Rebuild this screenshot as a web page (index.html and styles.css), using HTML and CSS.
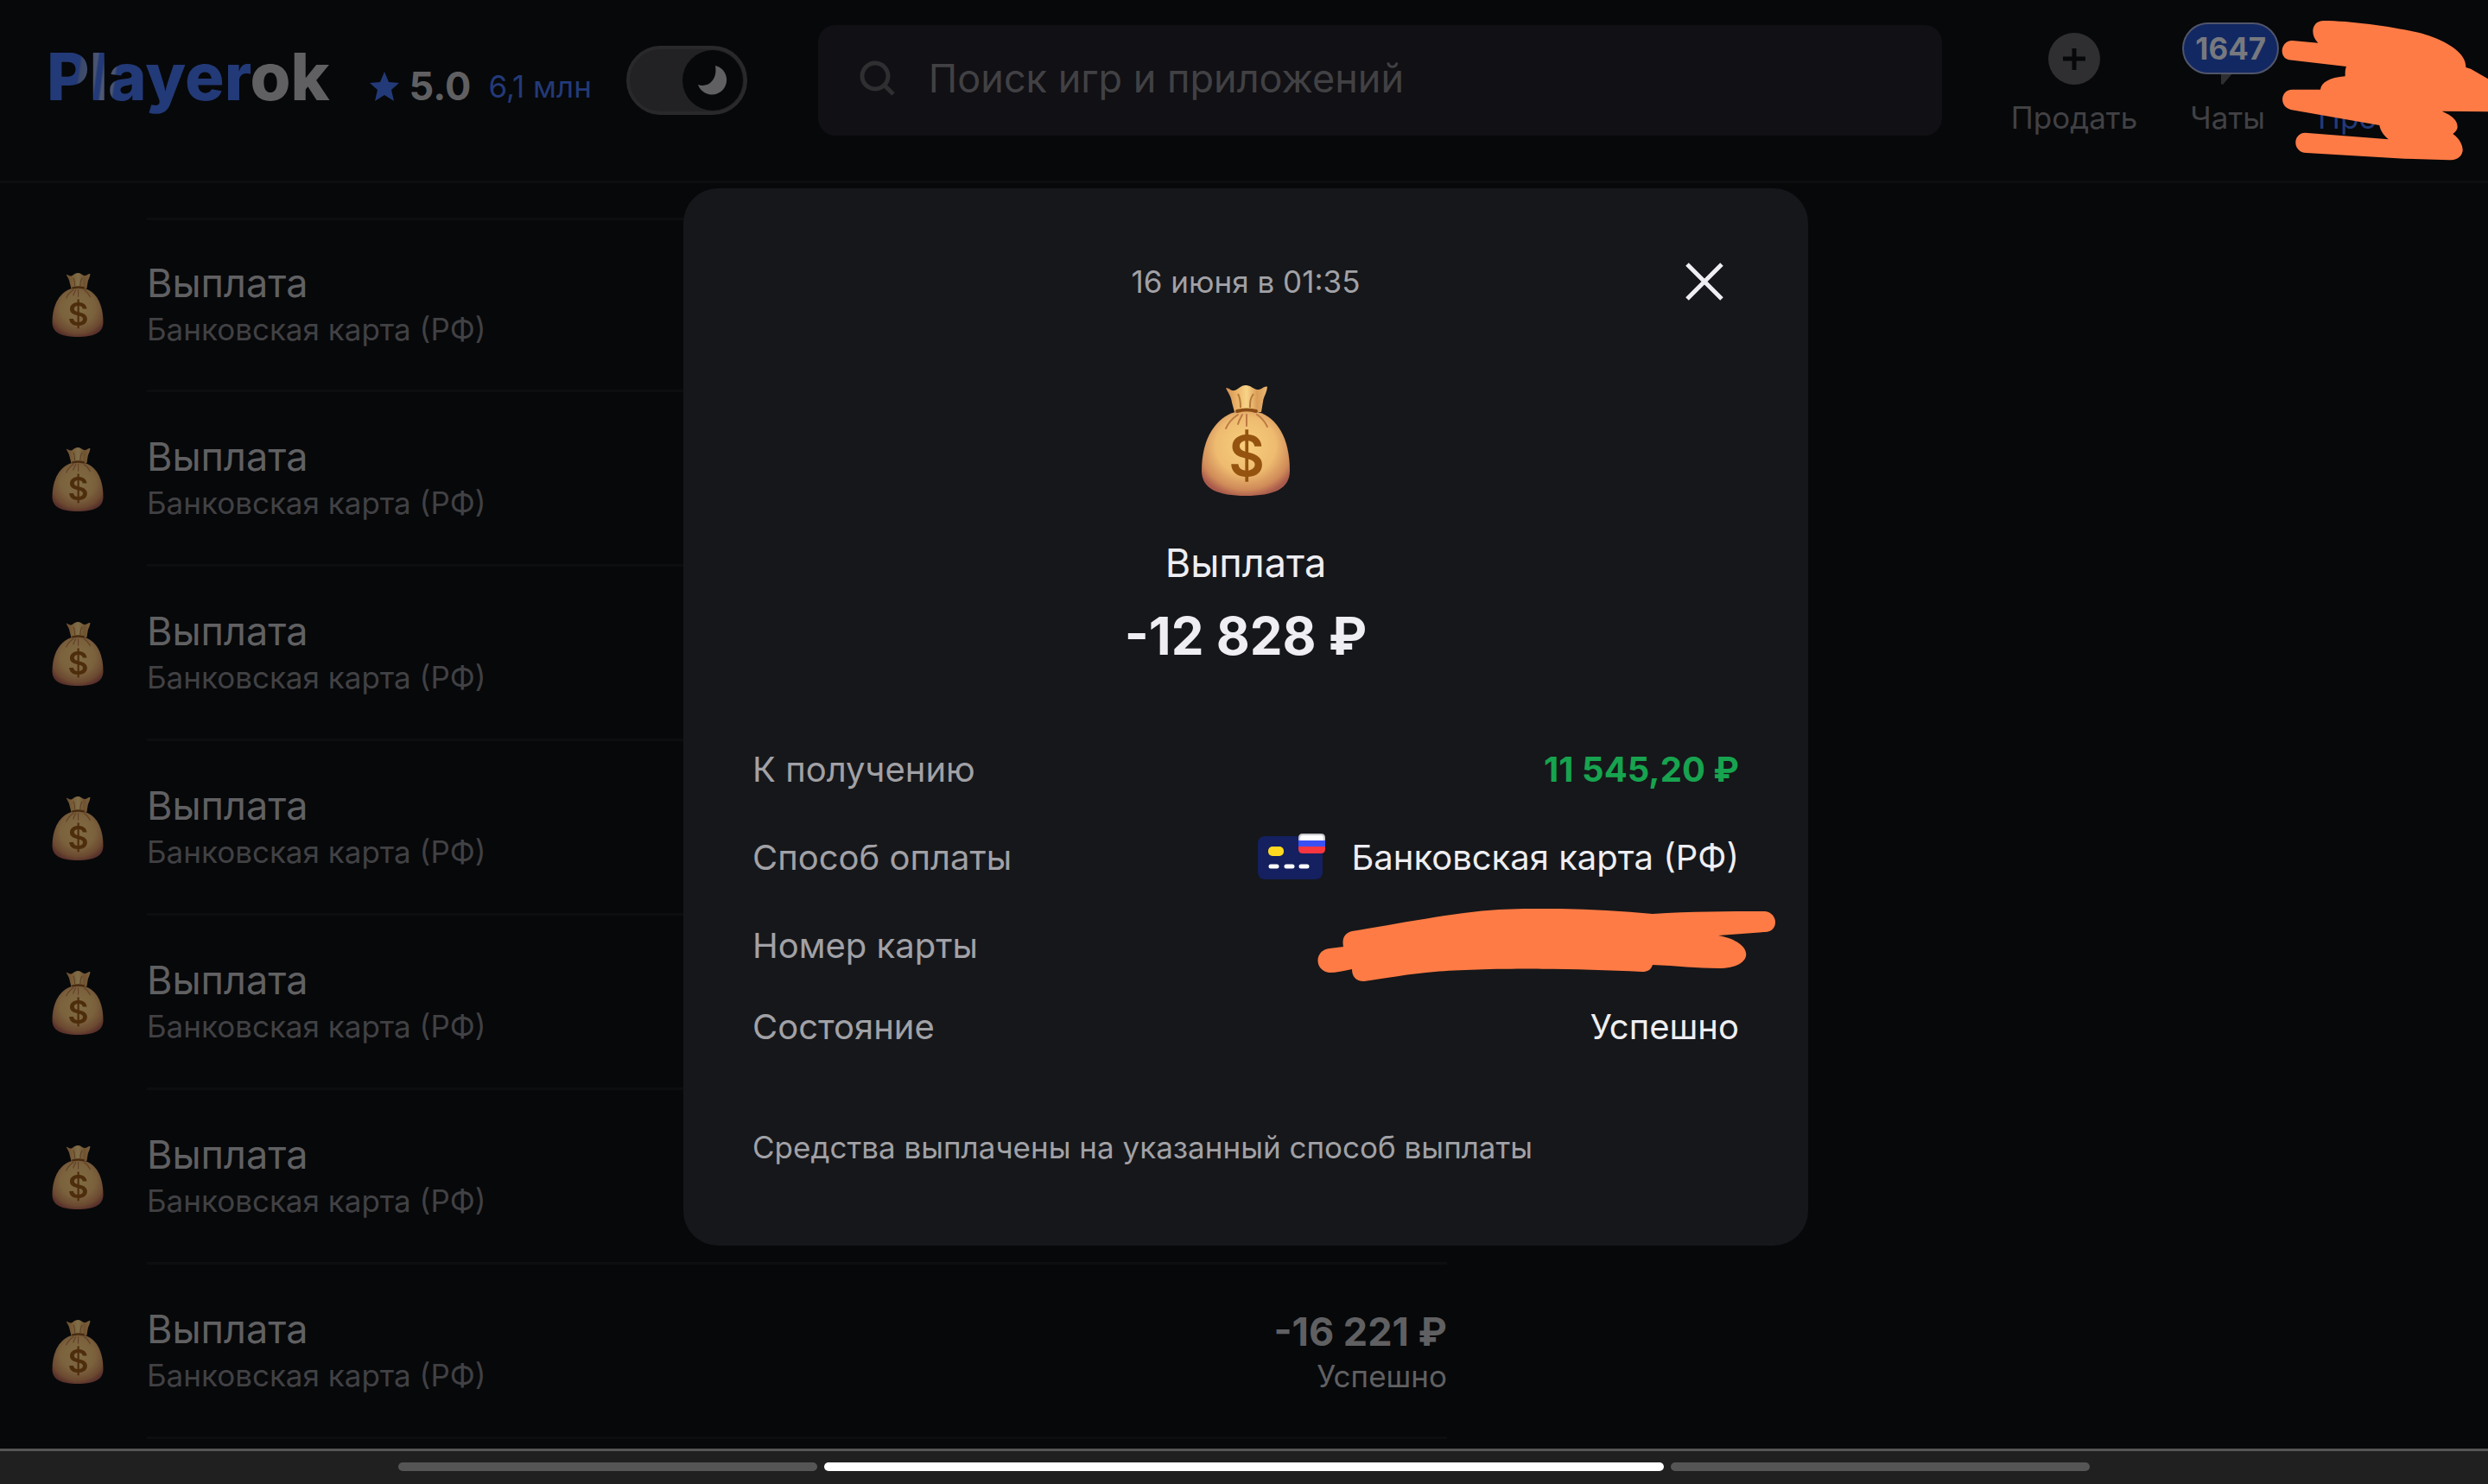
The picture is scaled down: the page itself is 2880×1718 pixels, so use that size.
FILE: index.html
```html
<!DOCTYPE html>
<html lang="ru">
<head>
    <meta charset="UTF-8">
    <meta name="viewport" content="width=device-width, initial-scale=1.0">
    <title>Playerok</title>
    <link rel="stylesheet" href="styles.css">
</head>
<body>

<!-- Мешок с деньгами, используется в списке и в окне -->
<svg class="gradients" aria-hidden="true">
    <defs>
        <radialGradient id="bag-body" cx="50%" cy="40%" r="62%">
            <stop offset="0" stop-color="#f8cf7c"/>
            <stop offset="0.55" stop-color="#eebb70"/>
            <stop offset="0.85" stop-color="#cf8a58"/>
            <stop offset="1" stop-color="#a95a4c"/>
        </radialGradient>
        <linearGradient id="bag-neck" x1="0" y1="0" x2="1" y2="0">
            <stop offset="0" stop-color="#d18f55"/>
            <stop offset="0.25" stop-color="#e9b266"/>
            <stop offset="0.5" stop-color="#f8d488"/>
            <stop offset="0.75" stop-color="#d99d58"/>
            <stop offset="1" stop-color="#e9b673"/>
        </linearGradient>
    </defs>
</svg>
<svg class="sprite" aria-hidden="true">
    <symbol id="bag" viewBox="0 0 102 128">
        <path fill="url(#bag-neck)" d="M28 3c4 0 6 4 10 3s7-6 13-6 8 4 13 5 9-5 12-3c-1 8-4 10-5 17l-2 12H38l-3-11C34 12 31 10 28 3z"/>
        <path fill="none" stroke="#b5783c" stroke-width="2" d="M42 10c3 5 3 10 3 16M60 10c-4 5-4 10-4 16"/>
        <path fill="url(#bag-body)" d="M39 31h26c22 6 37 30 37 68 0 21-19 29-51 29S0 120 0 99c0-38 17-62 39-68z"/>
        <path fill="none" stroke="#bd7a45" stroke-width="2" stroke-linecap="round" d="M42 34c-6 4-11 9-14 16M52 34v13M64 34c5 3 9 8 12 14M47 34c-2 4-4 7-5 11"/>
        <path fill="none" stroke="#8a4c14" stroke-width="4" stroke-linecap="round" d="M41 30q11-3 22 0"/>
        <text x="52" y="105" text-anchor="middle" class="bag-sign">$</text>
    </symbol>
</svg>

<!-- Шапка -->
<header class="header">
    <a class="logo" href="#"><span class="logo-player">Player</span>ok</a>
    <div class="rating">
        <svg class="rating-star" viewBox="0 0 34 34"><path d="M17 0l5 12 12 1-9 8 3 13-11-7-11 7 3-13-9-8 12-1z"/></svg>
        <span class="rating-value">5.0</span>
        <a class="rating-count" href="#">6,1 млн</a>
    </div>
    <label class="theme">
        <input type="checkbox" class="theme-input" aria-label="Тёмная тема" checked>
        <span class="theme-knob">
            <svg class="theme-moon" viewBox="0 0 34 34"><path d="M20 0a17 17 0 1 1-20 22C12 26 23 16 20 0z"/></svg>
        </span>
    </label>
    <label class="search">
        <svg class="search-icon" viewBox="0 0 42 42"><circle cx="18" cy="18" r="15"/><path d="M29 29l10 10"/></svg>
        <input type="text" class="search-input" placeholder="Поиск игр и приложений" aria-label="Поиск">
    </label>
    <nav class="menu">
        <a class="menu-item" href="#">
            <svg class="menu-icon" viewBox="0 0 60 60"><circle cx="30" cy="30" r="30"/><path d="M30 18v25M17 30h26"/></svg>
            Продать
        </a>
        <a class="menu-item" href="#">
            <svg class="menu-icon" viewBox="0 0 60 60"><path class="bubble" d="M14 8h32v38H36L24 60l-2-1V46h-8z"/></svg>
            Чаты
            <span class="badge">1647</span>
        </a>
        <a class="menu-item active" href="#">
            <span class="menu-icon"></span>
            Профиль
            <svg class="scribble" viewBox="0 0 720 492">
                <path d="M150 3C250 3 420 28 500 50c80 25 145 65 143 115l17 5 60 35v114l-160-2c40 18 54 33 54 55q0 12-16 24c27 19 35 44 34 59-4 25-27 32-47 32l-155-5-340-20c-50-2-50-68-5-70l290 23c-20-15-30-35-32-49L35 312c-43-12-35-70 5-70h98c2-24 32-42 86-46 0-16 0-26 4-34L28 139C-8 130 0 72 40 72l90 8C100 50 108 3 150 3z"/>
            </svg>
        </a>
    </nav>
</header>

<!-- Список операций -->
<main class="list">
    <div class="row"><svg class="row-bag"><use href="#bag"/></svg><div class="row-body"><div><div class="row-title">Выплата</div><div class="row-sub">Банковская карта (РФ)</div></div></div></div>
    <div class="row"><svg class="row-bag"><use href="#bag"/></svg><div class="row-body"><div><div class="row-title">Выплата</div><div class="row-sub">Банковская карта (РФ)</div></div></div></div>
    <div class="row"><svg class="row-bag"><use href="#bag"/></svg><div class="row-body"><div><div class="row-title">Выплата</div><div class="row-sub">Банковская карта (РФ)</div></div></div></div>
    <div class="row"><svg class="row-bag"><use href="#bag"/></svg><div class="row-body"><div><div class="row-title">Выплата</div><div class="row-sub">Банковская карта (РФ)</div></div></div></div>
    <div class="row"><svg class="row-bag"><use href="#bag"/></svg><div class="row-body"><div><div class="row-title">Выплата</div><div class="row-sub">Банковская карта (РФ)</div></div></div></div>
    <div class="row"><svg class="row-bag"><use href="#bag"/></svg><div class="row-body"><div><div class="row-title">Выплата</div><div class="row-sub">Банковская карта (РФ)</div></div></div></div>
    <div class="row">
        <svg class="row-bag"><use href="#bag"/></svg>
        <div class="row-body">
            <div><div class="row-title">Выплата</div><div class="row-sub">Банковская карта (РФ)</div></div>
            <div class="row-right"><div class="row-sum">-16 221 ₽</div><div class="row-status">Успешно</div></div>
        </div>
    </div>
</main>

<!-- Окно операции -->
<div class="overlay">
    <section class="modal" role="dialog" aria-label="Выплата">
        <div class="modal-head">
            <span class="modal-date">16 июня в 01:35</span>
            <button class="modal-close" aria-label="Закрыть"><svg viewBox="0 0 44 44"><path d="M2 2l40 40M42 2L2 42"/></svg></button>
        </div>
        <svg class="modal-bag"><use href="#bag"/></svg>
        <h2 class="modal-title">Выплата</h2>
        <div class="modal-sum">-12 828 ₽</div>
        <dl class="details">
            <div class="detail"><dt>К получению</dt><dd class="green">11 545,20 ₽</dd></div>
            <div class="detail detail-method">
                <dt>Способ оплаты</dt>
                <dd>
                    <svg class="card-icon" viewBox="0 0 78 54">
                        <rect x="0" y="3" width="75" height="50" rx="8" fill="#14205f"/>
                        <rect x="12" y="15" width="18" height="11" rx="5" fill="#ffd91f"/>
                        <path d="M15 38h7M33 38h7M50 38h7" stroke="#fff" stroke-width="5" stroke-linecap="round"/>
                        <path d="M47 8V5q0-5 5-5h21q5 0 5 5v3z" fill="#c9c9cf"/>
                        <path d="M49 8V5q0-3 3-3h21q3 0 3 3v3z" fill="#fff"/>
                        <path d="M47 8h31v7H47z" fill="#3a50f5"/>
                        <path d="M47 15h31v3q0 5-5 5H52q-5 0-5-5z" fill="#f73640"/>
                    </svg>
                    Банковская карта (РФ)
                </dd>
            </div>
            <div class="detail">
                <dt>Номер карты</dt>
                <dd>
                    <svg class="marker" viewBox="0 0 530 84"><path d="M40 26C90 18 160 4 210 1c60-3 120 0 178 5 45-3 90-3 130-3 16 2 16 24 0 24l-54 4c44 8 42 38 0 38-24 0-48-3-76-4-2 6-6 8-12 8-90-5-190-4-240 0-28 2-60 8-82 11-10 0-14-6-14-14-10 2-18 4-26 4-18-2-18-26 0-28l16-2c-2-10 2-16 10-18z"/></svg>
                </dd>
            </div>
            <div class="detail"><dt>Состояние</dt><dd>Успешно</dd></div>
        </dl>
        <p class="modal-note">Средства выплачены на указанный способ выплаты</p>
    </section>
</div>

<!-- Нижняя панель -->
<footer class="tabs">
    <span class="tab"></span>
    <span class="tab active"></span>
    <span class="tab"></span>
</footer>

</body>
</html>
```
FILE: styles.css
```css
* {
    box-sizing: border-box;
}

body {
    font-family: Inter, "Liberation Sans", sans-serif;
    font-size: 35px;
    background-color: #07080a;
    margin: 0;
    padding: 0;
    color: #606062;
    height: 100vh;
    overflow: hidden;
}

a {
    color: inherit;
    text-decoration: none;
}

.gradients {
    position: absolute;
    width: 0;
    height: 0;
}

.sprite {
    display: none;
}

.bag-sign {
    font-size: 64px;
    font-weight: 600;
    fill: #955310;
}

/* Шапка */
.header {
    display: flex;
    align-items: center;
    height: 212px;
    padding: 0 44px 24px 54px;
    border-bottom: 3px solid #0d0e10;
}

.logo {
    padding-bottom: 10px;
    font-size: 76px;
    font-weight: 800;
    line-height: 92px;
}

.logo-player {
    color: transparent;
    background: linear-gradient(98deg, #233a78 17%, #3b4868 18%, #4a5572 25%, #233a78 26%, #233a78 28%, #4f5972 29%, #4a5572 34%, #233a78 35%);
    background-clip: text;
    -webkit-background-clip: text;
}

.rating {
    display: flex;
    align-items: center;
    margin-left: 46px;
    padding-top: 14px;
}

.rating-star {
    width: 34px;
    height: 34px;
    fill: #233a78;
}

.rating-value {
    margin-left: 12px;
    font-size: 45px;
    font-weight: 700;
}

.rating-count {
    margin-left: 20px;
    color: #233a78;
}

.theme {
    position: relative;
    flex-shrink: 0;
    width: 140px;
    height: 80px;
    margin-left: 40px;
    border: 4px solid #29292b;
    border-radius: 40px;
    background-color: #222224;
}

.theme-input {
    position: absolute;
    opacity: 0;
}

.theme-knob {
    position: absolute;
    top: 1px;
    right: 1px;
    display: flex;
    align-items: center;
    justify-content: center;
    width: 70px;
    height: 70px;
    border-radius: 50%;
    background-color: #07080a;
}

.theme-moon {
    width: 34px;
    height: 34px;
    fill: #606062;
}

.search {
    display: flex;
    align-items: center;
    flex: 1;
    height: 128px;
    margin-left: 82px;
    padding: 0 48px 4px;
    border-radius: 20px;
    background-color: #111014;
}

.search-icon {
    width: 42px;
    height: 42px;
    fill: none;
    stroke: #2f2f32;
    stroke-width: 5;
}

.search-input {
    flex: 1;
    margin-left: 38px;
    padding: 0;
    border: none;
    background: none;
    font-family: inherit;
    font-size: 45px;
    color: #606062;
}

.search-input::placeholder {
    color: #414144;
    opacity: 1;
}

.menu {
    display: flex;
    gap: 61px;
    margin-left: 80px;
    padding-top: 10px;
    color: #414144;
}

.menu-item {
    position: relative;
    display: flex;
    flex-direction: column;
    align-items: center;
    line-height: 44px;
}

.menu-item.active {
    color: #233a78;
}

.menu-icon {
    width: 60px;
    height: 60px;
    margin-bottom: 16px;
    fill: #2f2f32;
    stroke: #07080a;
    stroke-width: 5;
}

.menu-icon circle,
.bubble {
    stroke: none;
}

.badge {
    position: absolute;
    top: -12px;
    left: -9px;
    width: 112px;
    border: 2px solid #50556a;
    border-radius: 30px;
    background-color: #122863;
    color: #77797f;
    font-weight: 700;
    line-height: 56px;
    text-align: center;
}

.scribble {
    position: absolute;
    top: -15px;
    left: -43px;
    width: 240px;
    height: 164px;
    fill: #ff7b45;
}

/* Список */
.list {
    width: 1675px;
    padding-top: 40px;
}

.row {
    display: flex;
    align-items: center;
    height: 202px;
    padding-left: 60px;
}

.row-bag {
    width: 60px;
    height: 74px;
    opacity: 0.5;
}

.row-body {
    display: flex;
    align-items: center;
    justify-content: space-between;
    flex: 1;
    height: 100%;
    margin-left: 50px;
    border-bottom: 3px solid #0d0e10;
}

.row:first-child .row-body {
    border-top: 3px solid #0d0e10;
}

.row-title {
    font-size: 45px;
    line-height: 56px;
}

.row-sub,
.row-status {
    line-height: 50px;
}

.row-sub {
    color: #414144;
}

.row-right {
    padding-top: 6px;
    text-align: right;
}

.row-sum {
    font-size: 45px;
    font-weight: 700;
    line-height: 52px;
}

/* Окно */
.overlay {
    position: fixed;
    inset: 0;
    padding: 218px 0 0 4px;
}

.modal {
    width: 1302px;
    margin: 0 auto;
    padding: 80px 80px 92px;
    border-radius: 40px;
    background-color: #16171a;
    color: #eeeef3;
    font-size: 40px;
}

.modal-head {
    display: flex;
    align-items: center;
    justify-content: center;
    position: relative;
    height: 56px;
}

.modal-date,
.modal-note {
    font-size: 35px;
    color: #a1a1a6;
}

.modal-close {
    position: absolute;
    right: 18px;
    width: 44px;
    height: 44px;
    padding: 0;
    border: none;
    background: none;
    cursor: pointer;
}

.modal-close svg {
    display: block;
    stroke: #eeeef3;
    stroke-width: 5;
}

.modal-bag {
    display: block;
    width: 102px;
    height: 128px;
    margin: 92px auto 50px;
}

.modal-title {
    margin: 0;
    font-size: 45px;
    font-weight: 400;
    line-height: 56px;
    text-align: center;
}

.modal-sum {
    margin-top: 20px;
    font-size: 60px;
    font-weight: 700;
    line-height: 72px;
    text-align: center;
}

.details {
    display: flex;
    flex-direction: column;
    gap: 46px;
    margin: 94px 0 0;
}

.detail {
    display: flex;
    align-items: center;
    justify-content: space-between;
    height: 48px;
}

.detail-method {
    height: 64px;
}

.detail dt {
    color: #a1a1a6;
}

.detail dd {
    display: flex;
    align-items: center;
    margin: 0;
}

.detail .green {
    color: #17a34f;
    font-weight: 700;
}

.card-icon {
    width: 78px;
    height: 54px;
    margin-right: 30px;
}

.marker {
    width: 530px;
    height: 84px;
    margin-right: -42px;
    fill: #ff7b45;
}

.modal-note {
    margin: 94px 0 0;
    line-height: 44px;
}

/* Нижняя панель */
.tabs {
    position: fixed;
    left: 0;
    right: 0;
    bottom: 0;
    display: flex;
    align-items: center;
    gap: 8px;
    height: 41px;
    padding: 0 16% 3px;
    border-top: 3px solid #555;
    background-color: #202020;
}

.tab {
    flex: 1;
    height: 10px;
    border-radius: 5px;
    background-color: #555;
}

.tab.active {
    flex: 2;
    background-color: #fff;
}
```
